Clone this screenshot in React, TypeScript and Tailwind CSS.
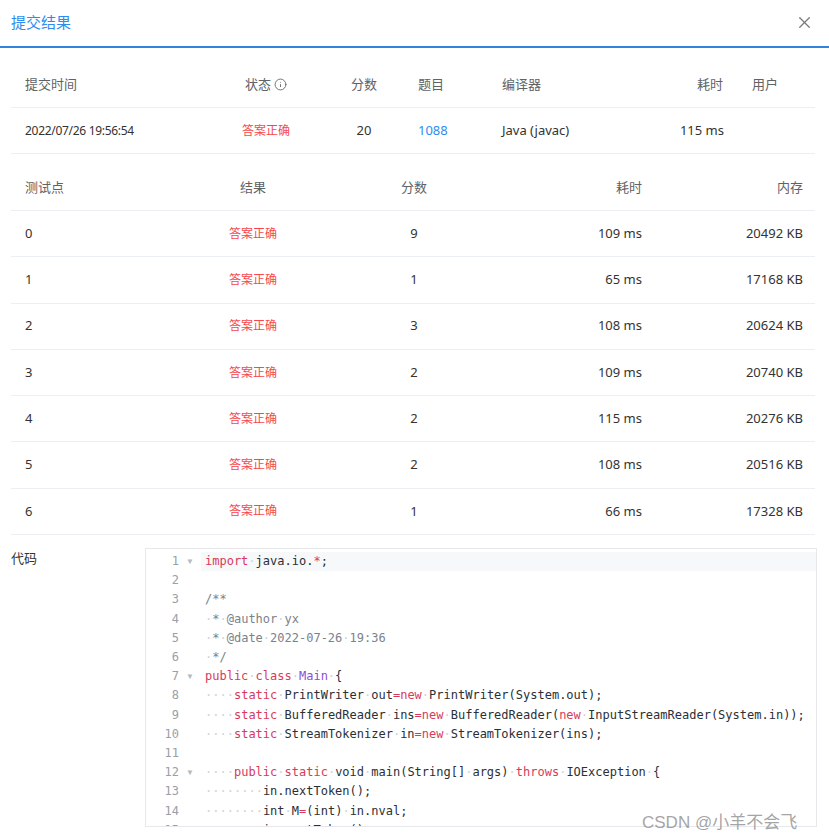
import React from "react";
import { Info, X } from "lucide-react";

const cn = { fontFamily: '"Noto Sans", "Noto Sans CJK SC", sans-serif' };
const mono = { fontFamily: '"DejaVu Sans Mono", "Liberation Mono", monospace' };

const K = "#d73a5c"; // keyword
const T = "#2b2f36"; // plain
const C = "#7a828c"; // comment
const P = "#8a4fd6"; // class name

type Seg = [string, string];

const code: { segs: Seg[]; fold?: boolean }[] = [
  { segs: [["import", K], [" java.io.", T], ["*", K], [";", T]], fold: true },
  { segs: [] },
  { segs: [["/**", C]] },
  { segs: [[" * @author yx", C]] },
  { segs: [[" * @date 2022-07-26 19:36", C]] },
  { segs: [[" */", C]] },
  { segs: [["public", K], [" ", T], ["class", K], [" ", T], ["Main", P], [" {", T]], fold: true },
  { segs: [["    ", T], ["static", K], [" PrintWriter out", T], ["=", K], ["new", K], [" PrintWriter(System.out);", T]] },
  { segs: [["    ", T], ["static", K], [" BufferedReader ins", T], ["=", K], ["new", K], [" BufferedReader(", T], ["new", K], [" InputStreamReader(System.in));", T]] },
  { segs: [["    ", T], ["static", K], [" StreamTokenizer in", T], ["=", K], ["new", K], [" StreamTokenizer(ins);", T]] },
  { segs: [] },
  { segs: [["    ", T], ["public", K], [" ", T], ["static", K], [" void main(String[] args) ", T], ["throws", K], [" IOException {", T]], fold: true },
  { segs: [["        in.nextToken();", T]] },
  { segs: [["        int M", T], ["=", K], ["(int) in.nval;", T]] },
  { segs: [["        in.nextToken();", T]] },
];

function Segment({ text, color }: { text: string; color: string }) {
  const parts = text.split(/( )/);
  return (
    <>
      {parts.map((p, i) =>
        p === " " ? (
          <span key={i} className="text-[#cfd3d8]">·</span>
        ) : (
          <span key={i} style={{ color }}>{p}</span>
        )
      )}
    </>
  );
}

const cases = [
  ["0", "9", "109 ms", "20492 KB"],
  ["1", "1", "65 ms", "17168 KB"],
  ["2", "3", "108 ms", "20624 KB"],
  ["3", "2", "109 ms", "20740 KB"],
  ["4", "2", "115 ms", "20276 KB"],
  ["5", "2", "108 ms", "20516 KB"],
  ["6", "1", "66 ms", "17328 KB"],
];

export default function App() {
  return (
    <div className="relative w-[829px] h-[840px] overflow-hidden bg-white" style={cn}>
      {/* header */}
      <div className="flex items-center justify-between h-[48px] pl-[11px] pr-[15px] pb-[2px] border-b-2 border-[#3183dc]">
        <span className="text-[15px] text-[#2d8cf0]">提交结果</span>
        <X className="h-[19px] w-[19px] text-[#7a7a7a]" strokeWidth={1.6} />
      </div>

      <div className="pl-[11px] pr-[14px] pt-[14px]">
        {/* summary table */}
        <div className="flex items-center h-[46px] border-b border-[#ebeef2] text-[13px] text-[#606266]">
          <div className="w-[189px] pl-[14px]">提交时间</div>
          <div className="w-[132px] flex justify-center items-center gap-[3px]">
            状态 <Info className="h-[13px] w-[13px]" strokeWidth={1.6} />
          </div>
          <div className="w-[64px] text-center">分数</div>
          <div className="w-[92px] pl-[22px]">题目</div>
          <div className="w-[160px] pl-[14px]">编译器</div>
          <div className="w-[89px] text-right pr-[14px]">耗时</div>
          <div className="flex-1 pl-[15px]">用户</div>
        </div>
        <div className="flex items-center h-[46px] border-b border-[#ebeef2] text-[13px] text-[#333]">
          <div className="w-[189px] pl-[14px] text-[12px] tracking-[-0.3px]">2022/07/26 19:56:54</div>
          <div className="w-[132px] text-center text-[12px] text-[#f5484d]">答案正确</div>
          <div className="w-[64px] text-center">20</div>
          <div className="w-[92px] pl-[22px] text-[#2d8cf0]">1088</div>
          <div className="w-[160px] pl-[14px]">Java (javac)</div>
          <div className="w-[89px] text-right pr-[13px]">115 ms</div>
          <div className="flex-1"></div>
        </div>

        {/* test cases */}
        <div className="mt-[11px] flex items-center h-[46px] border-b border-[#ebeef2] text-[13px] text-[#606266]">
          <div className="w-[169px] pl-[14px]">测试点</div>
          <div className="w-[146px] text-center">结果</div>
          <div className="w-[176px] text-center">分数</div>
          <div className="w-[154px] text-right pr-[14px]">耗时</div>
          <div className="flex-1 text-right pr-[12px]">内存</div>
        </div>
        {cases.map((c) => (
          <div key={c[0]} className="flex items-center h-[46.3px] border-b border-[#ebeef2] text-[13px] text-[#333]">
            <div className="w-[169px] pl-[14px]">{c[0]}</div>
            <div className="w-[146px] text-center text-[12px] text-[#f5484d]">答案正确</div>
            <div className="w-[176px] text-center">{c[1]}</div>
            <div className="w-[154px] text-right pr-[14px]">{c[2]}</div>
            <div className="flex-1 text-right pr-[12px]">{c[3]}</div>
          </div>
        ))}
      </div>

      {/* code */}
      <div className="flex pl-[11px] pt-[13px]">
        <div className="w-[134px] text-[13px] text-[#333] pt-[1px]">代码</div>
        <div className="w-[672px] h-[279px] border border-[#e6e8eb] overflow-hidden pt-[3px]" style={mono}>
          {code.map((l, i) => (
            <div key={i} className="flex h-[19.2px] items-center text-[12px] leading-[19.2px]">
              <div className="w-[33px] text-right text-[#9aa0a6]">{i + 1}</div>
              <div className="w-[22px] text-center text-[8px] text-[#b8bcc2]">{l.fold ? "▼" : ""}</div>
              <div className={`flex-1 whitespace-pre pl-[4px] ${i === 0 ? "bg-[#f6f8fa]" : ""}`}>
                {l.segs.map((s, j) => (
                  <Segment key={j} text={s[0]} color={s[1]} />
                ))}
              </div>
            </div>
          ))}
        </div>
      </div>

      {/* watermark */}
      <div
        className="absolute left-[642px] top-[810px] text-[17px] text-[#8d8d8d]/80 whitespace-nowrap"
        style={{ fontFamily: '"Liberation Sans", "Noto Sans CJK SC", sans-serif' }}
      >
        CSDN @小羊不会飞
      </div>
    </div>
  );
}
